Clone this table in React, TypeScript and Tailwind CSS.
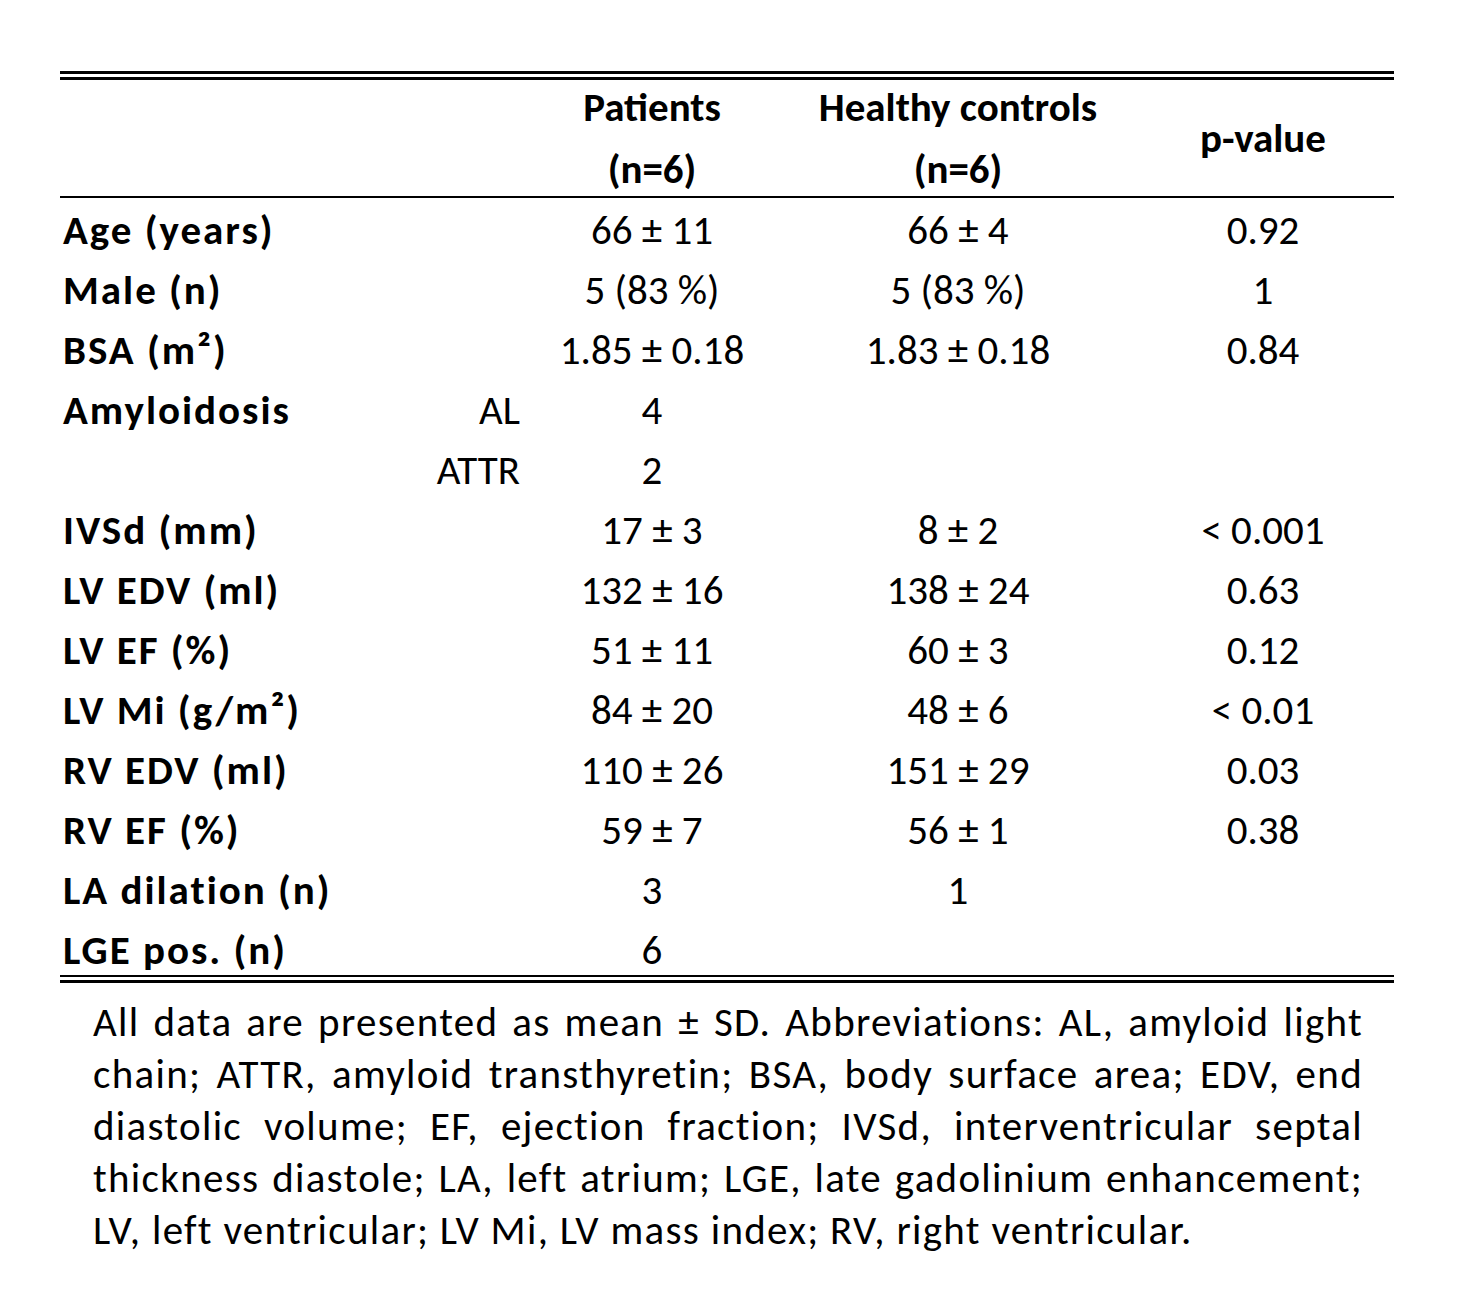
type Row = {
  label: string;
  sub?: string;
  patients?: string;
  controls?: string;
  p?: string;
};

const rows: Row[] = [
  { label: "Age (years)", patients: "66 ± 11", controls: "66 ± 4", p: "0.92" },
  { label: "Male (n)", patients: "5 (83 %)", controls: "5 (83 %)", p: "1" },
  { label: "BSA (m²)", patients: "1.85 ± 0.18", controls: "1.83 ± 0.18", p: "0.84" },
  { label: "Amyloidosis", sub: "AL", patients: "4" },
  { label: "", sub: "ATTR", patients: "2" },
  { label: "IVSd (mm)", patients: "17 ± 3", controls: "8 ± 2", p: "< 0.001" },
  { label: "LV EDV (ml)", patients: "132 ± 16", controls: "138 ± 24", p: "0.63" },
  { label: "LV EF (%)", patients: "51 ± 11", controls: "60 ± 3", p: "0.12" },
  { label: "LV Mi (g/m²)", patients: "84 ± 20", controls: "48 ± 6", p: "< 0.01" },
  { label: "RV EDV (ml)", patients: "110 ± 26", controls: "151 ± 29", p: "0.03" },
  { label: "RV EF (%)", patients: "59 ± 7", controls: "56 ± 1", p: "0.38" },
  { label: "LA dilation (n)", patients: "3", controls: "1" },
  { label: "LGE pos. (n)", patients: "6" },
];

const footnote = [
  "All data are presented as mean ± SD. Abbreviations: AL, amyloid light",
  "chain; ATTR, amyloid transthyretin; BSA, body surface area; EDV, end",
  "diastolic volume; EF, ejection fraction; IVSd, interventricular septal",
  "thickness diastole; LA, left atrium; LGE, late gadolinium enhancement;",
];

export default function App() {
  return (
    <div className="min-h-screen bg-white pt-[71px] pl-[60px] text-black font-['Carlito','Lato',sans-serif] text-[41px]">
      <div className="w-[1334px]">
        {/* top double rule */}
        <div className="h-[9px] border-y-[3px] border-black" />

        {/* header */}
        <div className="flex h-[118px] items-center border-b-2 border-black font-bold leading-[62px]">
          <div className="w-[460px]" />
          <div className="w-[264px] text-center">
            Patients
            <br />
            (n=6)
          </div>
          <div className="w-[348px] text-center">
            Healthy controls
            <br />
            (n=6)
          </div>
          <div className="w-[262px] text-center">p-value</div>
        </div>

        {/* body */}
        <div className="mt-[2px]">
          {rows.map((r, i) => (
            <div
              key={i}
              className={`flex items-start leading-[60px] whitespace-nowrap ${
                i === rows.length - 1 ? "h-[55px]" : "h-[60px]"
              }`}
            >
              <div className="w-[330px] pl-[3px] font-bold tracking-[2px]">{r.label}</div>
              <div className="w-[130px] text-right">{r.sub}</div>
              <div className="w-[264px] text-center">{r.patients}</div>
              <div className="w-[348px] text-center">{r.controls}</div>
              <div className="w-[262px] text-center">{r.p}</div>
            </div>
          ))}
        </div>

        {/* bottom double rule */}
        <div className="h-[8px] border-t-2 border-b-[3px] border-black" />

        {/* footnote */}
        <div className="mt-[13px] pl-[33px] pr-[31px] leading-[52px] tracking-[1.3px]">
          {footnote.map((line) => (
            <div key={line} className="whitespace-nowrap text-justify [text-align-last:justify]">
              {line}
            </div>
          ))}
          <div>LV, left ventricular; LV Mi, LV mass index; RV, right ventricular.</div>
        </div>
      </div>
    </div>
  );
}
